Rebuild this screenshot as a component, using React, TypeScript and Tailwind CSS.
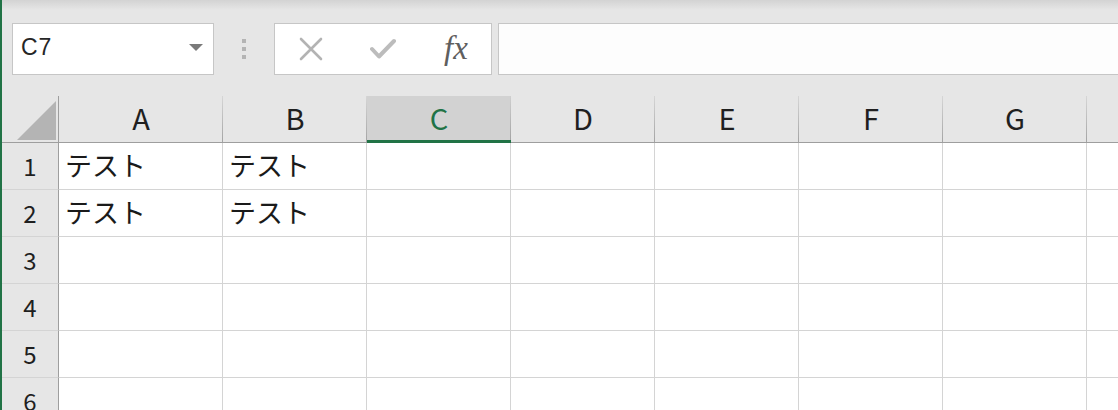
import React from "react";

const columns = ["A", "B", "C", "D", "E", "F", "G", "H"];
const rows = [1, 2, 3, 4, 5, 6];
const cellData: Record<string, string> = {
  A1: "テスト",
  B1: "テスト",
  A2: "テスト",
  B2: "テスト",
};
const activeCol = "C";

const jp = "font-['Noto_Sans_CJK_JP','Noto_Sans',sans-serif]";

function NameBox() {
  return (
    <div className="flex h-[52px] w-[202px] items-center justify-between border border-[#c6c6c6] bg-white pb-[3px] pl-[8px] pr-[10px]">
      <span className="font-['Liberation_Sans',Arial,sans-serif] text-[23px] leading-none tracking-[1px] text-[#262626]">
        C7
      </span>
      <svg width="14" height="7" viewBox="0 0 14 7">
        <path d="M0 0 H14 L7 7 Z" fill="#7a7a7a" />
      </svg>
    </div>
  );
}

function Grip() {
  return (
    <div className="flex w-[60px] flex-col items-center gap-[4px]">
      <span className="h-[4px] w-[4px] bg-[#b4b4b4]" />
      <span className="h-[4px] w-[4px] bg-[#b4b4b4]" />
      <span className="h-[4px] w-[4px] bg-[#b4b4b4]" />
    </div>
  );
}

function FormulaButtons() {
  return (
    <div className="grid h-[52px] w-[218px] grid-cols-3 items-center border border-[#c6c6c6] bg-white">
      <div className="flex justify-center">
        <svg width="24" height="24" viewBox="0 0 24 24">
          <path d="M2 2 L22 22 M22 2 L2 22" stroke="#b3b3b3" strokeWidth="2.6" strokeLinecap="round" />
        </svg>
      </div>
      <div className="flex justify-center">
        <svg width="26" height="22" viewBox="0 0 26 22">
          <path
            d="M2 11 L9 18.5 L24 3"
            stroke="#bcbcbc"
            strokeWidth="4"
            fill="none"
            strokeLinecap="round"
            strokeLinejoin="round"
          />
        </svg>
      </div>
      <div className="flex justify-center pb-[2px] pl-[2px]">
        <span className="font-['Liberation_Serif','Times_New_Roman',serif] text-[33px] italic leading-none text-[#5f5f5f]">
          fx
        </span>
      </div>
    </div>
  );
}

function Toolbar() {
  return (
    <div className="flex h-[96px] items-start bg-[linear-gradient(to_bottom,#d3d3d3_0px,#e6e6e6_10px)] pl-[10px] pt-[23px]">
      <NameBox />
      <div className="flex h-[52px] items-center">
        <Grip />
      </div>
      <FormulaButtons />
      <div className="ml-[6px] h-[52px] flex-1 border border-r-0 border-[#c6c6c6] bg-[#fdfdfd]" />
    </div>
  );
}

function SheetGrid() {
  return (
    <div className="grid grid-cols-[57px_164px_repeat(7,144px)] auto-rows-[47px]">
      {/* select-all corner */}
      <div className="flex items-end justify-end border-b border-r border-[#9e9e9e] bg-[#e6e6e6] pb-[2px] pr-[2px]">
        <svg width="39" height="39" viewBox="0 0 39 39">
          <path d="M39 0 V39 H0 Z" fill="#b4b4b4" />
        </svg>
      </div>
      {columns.map((c) =>
        c === activeCol ? (
          <div
            key={c}
            className={`flex items-center justify-center border-b-[3px] border-[#217346] bg-[#d2d2d2] bg-[linear-gradient(to_bottom,#cfcfcf,#a4a4a4)] bg-[length:1px_100%] bg-right bg-no-repeat pb-[2px] text-[29px] leading-none text-[#217346] ${jp}`}
          >
            {c}
          </div>
        ) : (
          <div
            key={c}
            className={`flex items-center justify-center border-b border-[#9e9e9e] bg-[#e6e6e6] bg-[linear-gradient(to_bottom,#d6d6d6,#a4a4a4)] bg-[length:1px_100%] bg-right bg-no-repeat pb-[4px] text-[29px] leading-none text-[#1f1f1f] ${jp}`}
          >
            {c}
          </div>
        )
      )}
      {rows.map((r) => (
        <React.Fragment key={r}>
          <div
            className={`flex items-center justify-center border-b border-r border-b-[#d4d4d4] border-r-[#9e9e9e] bg-[#e6e6e6] text-[24px] leading-none text-[#1f1f1f] ${jp}`}
          >
            {r}
          </div>
          {columns.map((c) => (
            <div
              key={c}
              className={`flex items-center border-b border-r border-[#d4d4d4] bg-white pb-[3px] pl-[6px] text-[27px] leading-none text-[#1a1a1a] ${jp}`}
            >
              {cellData[`${c}${r}`] ?? ""}
            </div>
          ))}
        </React.Fragment>
      ))}
    </div>
  );
}

export default function App() {
  return (
    <div className="h-[410px] w-[1118px] overflow-hidden border-l-2 border-[#217346] bg-[#e6e6e6]">
      <Toolbar />
      <SheetGrid />
    </div>
  );
}
